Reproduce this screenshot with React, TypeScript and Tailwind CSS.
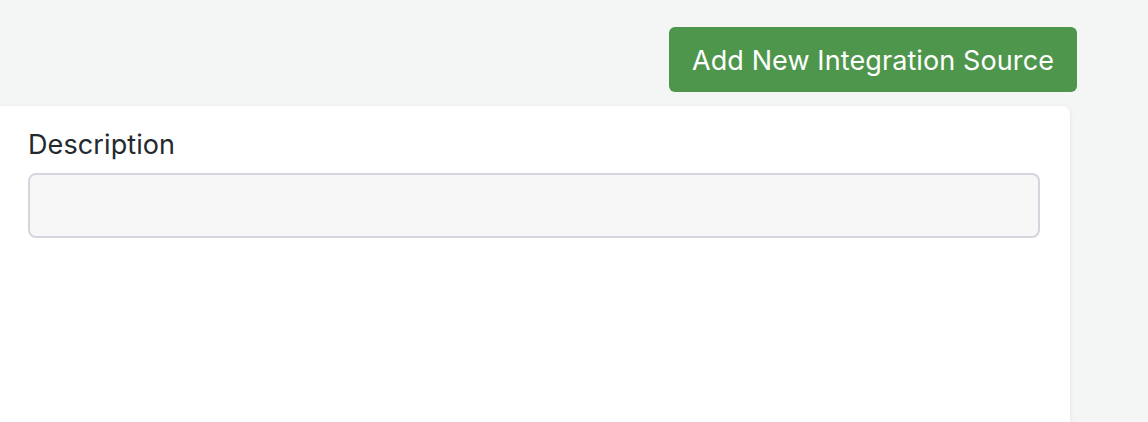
export default function App() {
  return (
    <main
      className="h-[422px] w-[1148px] overflow-hidden bg-[#f4f5f5]"
      style={{ fontFamily: 'Inter, "Noto Sans", sans-serif' }}
    >
      <div className="w-[1077px]">
        {/* Header actions */}
        <div className="flex justify-end pt-[27px]">
          <button className="h-[65px] w-[408px] rounded-[6px] bg-[#4e964b] pt-[3px] text-[27px] tracking-[0.1px] text-white">
            Add New Integration Source
          </button>
        </div>

        {/* Card */}
        <div className="mt-[14px] h-[320px] w-[1070px] rounded-tr-[8px] bg-white shadow-[0_1px_4px_rgba(0,0,0,0.08)]">
          <div className="px-[28px] pt-[23px]">
            <label className="block text-[27px] leading-[32px] tracking-[0.1px] text-[#24292e]">Description</label>
            <input
              type="text"
              className="mt-[12px] block h-[65px] w-[1012px] rounded-[8px] border-2 border-[#d3d6dc] bg-[#f7f7f7] px-4 outline-none"
            />
          </div>
        </div>
      </div>
    </main>
  )
}
